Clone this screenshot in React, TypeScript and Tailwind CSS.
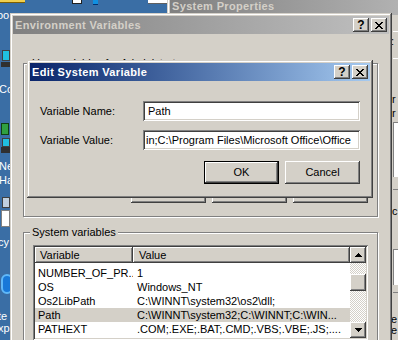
import React from 'react';

const raised =
  'shadow-[inset_-1px_-1px_0_#404040,inset_1px_1px_0_#ffffff,inset_-2px_-2px_0_#808080,inset_2px_2px_0_#d4d0c8]';
const frame =
  'shadow-[inset_-1px_-1px_0_#404040,inset_1px_1px_0_#d4d0c8,inset_-2px_-2px_0_#808080,inset_2px_2px_0_#ffffff]';
const sunken =
  'shadow-[inset_1px_1px_0_#808080,inset_-1px_-1px_0_#ffffff,inset_2px_2px_0_#404040,inset_-2px_-2px_0_#d4d0c8]';
const etched = 'border border-[#808080] shadow-[inset_1px_1px_0_#ffffff,1px_1px_0_#ffffff]';

const CloseGlyph = () => (
  <svg width="8" height="7" viewBox="0 0 8 7" shapeRendering="crispEdges">
    <path
      d="M0 0h2v1H0z M6 0h2v1H6z M1 1h2v1H1z M5 1h2v1H5z M2 2h4v1H2z M3 3h2v1H3z M2 4h4v1H2z M1 5h2v1H1z M5 5h2v1H5z M0 6h2v1H0z M6 6h2v1H6z"
      fill="#000"
    />
  </svg>
);

const ArrowUp = () => (
  <svg width="7" height="4" viewBox="0 0 7 4" shapeRendering="crispEdges">
    <path d="M3 0h1v1h1v1h1v1h1v1H0V3h1V2h1V1h1z" fill="#000" />
  </svg>
);

const ArrowDown = () => (
  <svg width="7" height="4" viewBox="0 0 7 4" shapeRendering="crispEdges">
    <path d="M0 0h7v1H6v1H5v1H4v1H3V3H2V2H1V1H0z" fill="#000" />
  </svg>
);

const CaptionButtons = () => (
  <div className="flex items-center gap-[2px]">
    <div className={`w-[16px] h-[14px] bg-[#d4d0c8] ${raised} flex items-center justify-center text-[12px] font-bold leading-none text-black`}>
      ?
    </div>
    <div className={`w-[16px] h-[14px] bg-[#d4d0c8] ${raised} flex items-center justify-center`}>
      <CloseGlyph />
    </div>
  </div>
);

const TitleBar: React.FC<{ title: string; active?: boolean }> = ({ title, active }) => (
  <div
    className={`h-[18px] shrink-0 flex items-center justify-between pl-[2px] pr-[2px] ${
      active
        ? 'bg-linear-to-r from-[#0a246a] to-[#a6caf0] text-white'
        : 'bg-linear-to-r from-[#808080] to-[#c0c0c0] text-[#d4d0c8]'
    }`}
  >
    <span className="text-[11px] font-bold tracking-[0.35px] leading-none whitespace-nowrap">{title}</span>
    <CaptionButtons />
  </div>
);

const Btn: React.FC<{ label: string; isDefault?: boolean }> = ({ label, isDefault }) =>
  isDefault ? (
    <div className="w-[75px] h-[23px] border border-black">
      <div className={`w-full h-full bg-[#d4d0c8] ${raised} flex items-center justify-center`}>{label}</div>
    </div>
  ) : (
    <div className={`w-[75px] h-[23px] bg-[#d4d0c8] ${raised} flex items-center justify-center`}>{label}</div>
  );

const rows = [
  { name: 'NUMBER_OF_PR...', value: '1' },
  { name: 'OS', value: 'Windows_NT' },
  { name: 'Os2LibPath', value: 'C:\\WINNT\\system32\\os2\\dll;' },
  { name: 'Path', value: 'C:\\WINNT\\system32;C:\\WINNT;C:\\WIN...', selected: true },
  { name: 'PATHEXT', value: '.COM;.EXE;.BAT;.CMD;.VBS;.VBE;.JS;....' },
];

const DesktopBits = () => (
  <>
    {/* top strip icons, cut off by the top of the screen */}
    <div className="absolute left-0 top-0 w-[25px] h-[3px] bg-[#f0d050] border-b border-[#806000]" />
    <div className="absolute left-[72px] top-0 w-[10px] h-[4px] bg-white border border-t-0 border-[#202020]" />
    <div className="absolute left-[93px] top-0 w-[5px] h-[5px] bg-[#1090e0] border-b border-[#003070]" />
    <div className="absolute left-[148px] top-0 w-[19px] h-[4px] bg-white border-b border-[#606060]" />
    {/* left strip icons and labels */}
    <div className="absolute left-[-3px] top-[9px] text-white text-[11px] leading-[13px]">oo</div>
    <div className="absolute left-[2px] top-[50px] w-[8px] h-[11px] bg-[#20c0e0] border border-[#404040]" />
    <div className="absolute left-[1px] top-[62px] w-[9px] h-[5px] bg-[#303030]" />
    <div className="absolute left-[-1px] top-[83px] text-white text-[11px] leading-[13px]">Co</div>
    <div className="absolute left-[1px] top-[123px] w-[8px] h-[12px] bg-[#30a040] border border-[#104010]" />
    <div className="absolute left-[2px] top-[138px] w-[8px] h-[9px] bg-[#20c0e0] border border-[#404040]" />
    <div className="absolute left-[1px] top-[147px] w-[9px] h-[6px] bg-[#303030]" />
    <div className="absolute left-[-1px] top-[160px] text-white text-[11px] leading-[13px]">Ne</div>
    <div className="absolute left-[-1px] top-[174px] text-white text-[11px] leading-[13px]">Ha</div>
    <div className="absolute left-[2px] top-[197px] w-[8px] h-[11px] bg-[#c0d0e0] border border-[#404040]" />
    <div className="absolute left-[1px] top-[210px] w-[9px] h-[17px] bg-white border border-[#808080]" />
    <div className="absolute left-[-2px] top-[236px] text-white text-[11px] leading-[13px]">cy</div>
    <div className="absolute left-[1px] top-[274px] w-[12px] h-[20px] rounded-full bg-[#1878d8] border-2 border-[#60b8f8]" />
    <div className="absolute left-[-2px] top-[310px] text-white text-[11px] leading-[13px]">te</div>
    <div className="absolute left-[-2px] top-[322px] text-white text-[11px] leading-[13px]">xp</div>
  </>
);

const App: React.FC = () => {
  return (
    <div className="relative w-[398px] h-[340px] overflow-hidden bg-[#3a6ea5] text-[11px] text-black [font-family:'Liberation_Sans',Arial,sans-serif]">
      <DesktopBits />

      {/* System Properties, behind */}
      <div className={`absolute left-[167px] top-[-6px] w-[300px] h-[360px] bg-[#d4d0c8] ${frame} p-[3px] flex flex-col`}>
        <TitleBar title="System Properties" />
        <div className="ml-[223px] flex flex-col text-[11px] leading-[13px]">
          <div className="mt-[16px] h-[1px] bg-white" />
          <div className="mt-[3px] h-[13px] -ml-[2px]">:</div>
          <div className="mt-[10px] h-[1px] bg-white" />
          <div className="mt-[34px] h-[13px] -ml-[1px]">r</div>
          <div className="mt-[1px] h-[13px] -ml-[1px]">r</div>
          <div className="mt-[2px] h-[55px] bg-white border-l border-t border-[#808080]" />
          <div className="mt-[12px] h-[1px] bg-[#808080]" />
          <div className="mt-[15px] h-[13px] -ml-[1px]">c</div>
          <div className="mt-[31px] h-[36px] bg-white border-l border-t border-[#808080]" />
          <div className="mt-[6px] h-[2px] border-b border-[#808080]" />
          <div className="mt-[20px] h-[11px] -ml-[2px]">e</div>
          <div className="h-[11px] -ml-[2px]">e</div>
        </div>
      </div>

      {/* Environment Variables */}
      <div className={`absolute left-[10px] top-[13px] w-[382px] h-[340px] bg-[#d4d0c8] ${frame} p-[3px] flex flex-col`}>
        <TitleBar title="Environment Variables" />
        <div className="flex flex-col">
          <div className={`relative mt-[29px] ml-[10px] mr-[11px] h-[154px] ${etched} flex flex-col justify-end`}>
            <span className="absolute -top-[7px] left-[6px] px-[2px] bg-[#d4d0c8] leading-[13px] whitespace-nowrap">
              User variables for Administrator
            </span>
            <div className="flex justify-end gap-[6px] mr-[9px] mb-[13px]">
              <Btn label="New..." />
              <Btn label="Edit..." />
              <Btn label="Delete" />
            </div>
          </div>

          <div className={`relative mt-[15px] ml-[10px] mr-[11px] h-[140px] ${etched} flex flex-col`}>
            <span className="absolute -top-[7px] left-[6px] px-[2px] bg-[#d4d0c8] leading-[13px] whitespace-nowrap">
              System variables
            </span>
            <div className={`mt-[12px] ml-[9px] mr-[9px] h-[95px] bg-white ${sunken} p-[2px] flex`}>
              <div className="flex-1 flex flex-col min-w-0">
                <div className="flex h-[16px] shrink-0">
                  <div className={`w-[98px] bg-[#d4d0c8] ${raised} pl-[5px] flex items-center`}>Variable</div>
                  <div className={`flex-1 bg-[#d4d0c8] ${raised} pl-[6px] flex items-center`}>Value</div>
                </div>
                <div className="mt-[3px] flex flex-col">
                  {rows.map(r => (
                    <div
                      key={r.name}
                      className={`flex h-[14px] items-center whitespace-nowrap ${r.selected ? 'bg-[#d4d0c8]' : ''}`}
                    >
                      <div className="w-[98px] pl-[3px] overflow-hidden">{r.name}</div>
                      <div className="flex-1 pl-[4px] overflow-hidden">{r.value}</div>
                    </div>
                  ))}
                </div>
              </div>
              <div className="w-[16px] shrink-0 flex flex-col">
                <div className={`h-[16px] bg-[#d4d0c8] ${raised} flex items-center justify-center`}>
                  <ArrowUp />
                </div>
                <div className="flex-1 flex flex-col [background-image:repeating-conic-gradient(#d4d0c8_0%_25%,#ffffff_0%_50%)] [background-size:2px_2px]">
                  <div className={`mt-[11px] h-[17px] bg-[#d4d0c8] ${raised}`} />
                </div>
                <div className={`h-[16px] bg-[#d4d0c8] ${raised} flex items-center justify-center`}>
                  <ArrowDown />
                </div>
              </div>
            </div>
          </div>
        </div>
      </div>

      {/* Edit System Variable, on top */}
      <div className={`absolute left-[27px] top-[60px] w-[346px] h-[138px] bg-[#d4d0c8] ${frame} p-[3px] flex flex-col`}>
        <TitleBar title="Edit System Variable" active />
        <div className="flex flex-col px-[10px]">
          <div className="mt-[20px] flex items-center">
            <span className="w-[103px]">Variable Name:</span>
            <div className={`w-[217px] h-[20px] bg-white ${sunken} flex items-center pl-[5px] whitespace-nowrap overflow-hidden`}>
              Path
            </div>
          </div>
          <div className="mt-[9px] flex items-center">
            <span className="w-[103px]">Variable Value:</span>
            <div className={`w-[217px] h-[20px] bg-white ${sunken} flex items-center pl-[3px] whitespace-nowrap overflow-hidden`}>
              in;C:\Program Files\Microsoft Office\Office
            </div>
          </div>
          <div className="mt-[11px] flex justify-end gap-[6px]">
            <Btn label="OK" isDefault />
            <Btn label="Cancel" />
          </div>
        </div>
      </div>
    </div>
  );
};

export default App;
